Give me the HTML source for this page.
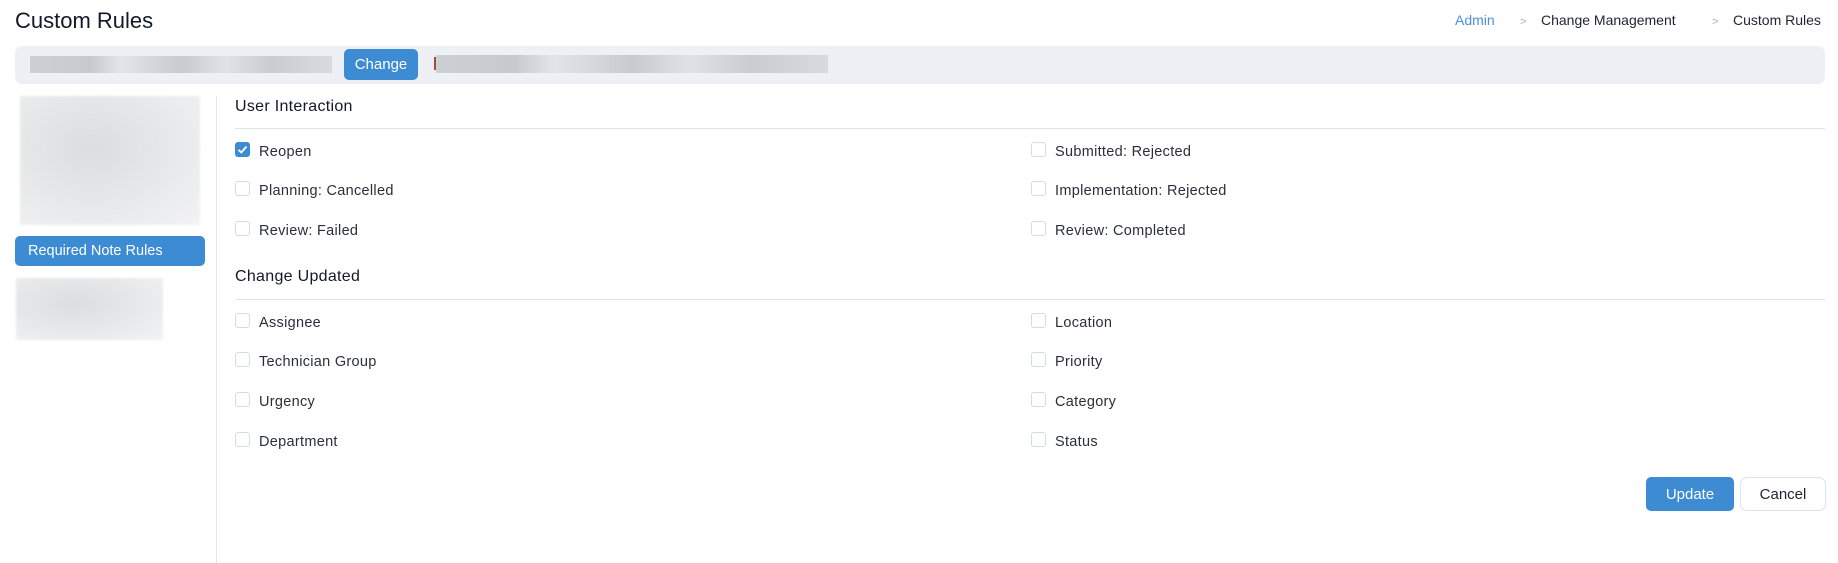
<!DOCTYPE html>
<html><head><meta charset="utf-8"><style>
*{box-sizing:border-box;margin:0;padding:0}
body{width:1838px;height:563px;background:#fff;font-family:"Liberation Sans",sans-serif;color:#1e2433;position:relative;overflow:hidden}
.a{position:absolute}
.title{left:15px;top:8px;font-size:22px;color:#111827}
.bc{top:12px;font-size:14px;color:#1e2433}
.bar{left:15px;top:46px;width:1810px;height:38px;background:#edf0f4;border-radius:7px}
.btn{background:#3d8bd3;color:#fff;border-radius:5px;display:flex;align-items:center;justify-content:center;font-size:15px}
.blur{background:linear-gradient(90deg,#cdd0d4,#c6cacf 20%,#e2e5e8 30%,#c7cbd0 50%,#dfe2e6 65%,#c9ccd1 80%,#d8dbde)}
.sb{background:radial-gradient(ellipse at 40% 40%,#dcdde0,#e9eaec 60%,#f3f3f4);filter:blur(1px)}
.h{font-size:16px;color:#111827;left:235px;letter-spacing:0.3px}
.line{left:235px;width:1590px;height:1px;background:#dde2ea}
.cb{width:15px;height:15px;border:1px solid #d5dbe3;border-radius:3px;background:#fff}
.lb{font-size:14.5px;color:#2a2f3c;line-height:17px;letter-spacing:0.3px;margin-top:3px}
</style></head><body>
<div class="a title">Custom Rules</div>
<div class="a bc" style="left:1455px;color:#4a90d9">Admin</div>
<div class="a bc" style="left:1520px;color:#a8b0bd;font-size:11px;top:16px">&gt;</div>
<div class="a bc" style="left:1541px">Change Management</div>
<div class="a bc" style="left:1712px;color:#a8b0bd;font-size:11px;top:16px">&gt;</div>
<div class="a bc" style="left:1733px">Custom Rules</div>
<div class="a bar"></div>
<div class="a blur" style="left:30px;top:56px;width:302px;height:17px"></div>
<div class="a btn" style="left:344px;top:49px;width:74px;height:31px">Change</div>
<div class="a" style="left:434px;top:57px;width:2px;height:13px;background:#a05030"></div>
<div class="a blur" style="left:436px;top:55px;width:392px;height:18px"></div>
<div class="a sb" style="left:20px;top:96px;width:180px;height:129px"></div>
<div class="a btn" style="left:15px;top:236px;width:190px;height:30px;justify-content:flex-start;padding-left:13px;font-size:14.5px">Required Note Rules</div>
<div class="a sb" style="left:16px;top:278px;width:147px;height:62px"></div>
<div class="a" style="left:216px;top:96px;width:1px;height:467px;background:#e2e6ec"></div>
<div class="a h" style="top:98px">User Interaction</div>
<div class="a line" style="top:128px"></div>
<div class="a h" style="top:268px">Change Updated</div>
<div class="a line" style="top:299px"></div>
<div class="a" style="left:235px;top:142px;width:15px;height:15px;background:#3d8bd3;border-radius:3px"><svg width="15" height="15" viewBox="0 0 15 15"><path d="M3.5 7.8 L6.3 10.5 L11.5 4.5" stroke="#fff" stroke-width="1.8" fill="none"/></svg></div>
<div class="a lb" style="left:259px;top:141px">Reopen</div>
<div class="a cb" style="left:235px;top:181px"></div><div class="a lb" style="left:259px;top:180px">Planning: Cancelled</div>
<div class="a cb" style="left:235px;top:221px"></div><div class="a lb" style="left:259px;top:220px">Review: Failed</div>
<div class="a cb" style="left:1031px;top:142px"></div><div class="a lb" style="left:1055px;top:141px">Submitted: Rejected</div>
<div class="a cb" style="left:1031px;top:181px"></div><div class="a lb" style="left:1055px;top:180px">Implementation: Rejected</div>
<div class="a cb" style="left:1031px;top:221px"></div><div class="a lb" style="left:1055px;top:220px">Review: Completed</div>
<div class="a cb" style="left:235px;top:313px"></div><div class="a lb" style="left:259px;top:312px">Assignee</div>
<div class="a cb" style="left:235px;top:352px"></div><div class="a lb" style="left:259px;top:351px">Technician Group</div>
<div class="a cb" style="left:235px;top:392px"></div><div class="a lb" style="left:259px;top:391px">Urgency</div>
<div class="a cb" style="left:235px;top:432px"></div><div class="a lb" style="left:259px;top:431px">Department</div>
<div class="a cb" style="left:1031px;top:313px"></div><div class="a lb" style="left:1055px;top:312px">Location</div>
<div class="a cb" style="left:1031px;top:352px"></div><div class="a lb" style="left:1055px;top:351px">Priority</div>
<div class="a cb" style="left:1031px;top:392px"></div><div class="a lb" style="left:1055px;top:391px">Category</div>
<div class="a cb" style="left:1031px;top:432px"></div><div class="a lb" style="left:1055px;top:431px">Status</div>
<div class="a btn" style="left:1646px;top:477px;width:88px;height:34px">Update</div>
<div class="a" style="left:1740px;top:477px;width:86px;height:34px;border:1px solid #dde2ea;border-radius:7px;display:flex;align-items:center;justify-content:center;font-size:15px">Cancel</div>
</body></html>
